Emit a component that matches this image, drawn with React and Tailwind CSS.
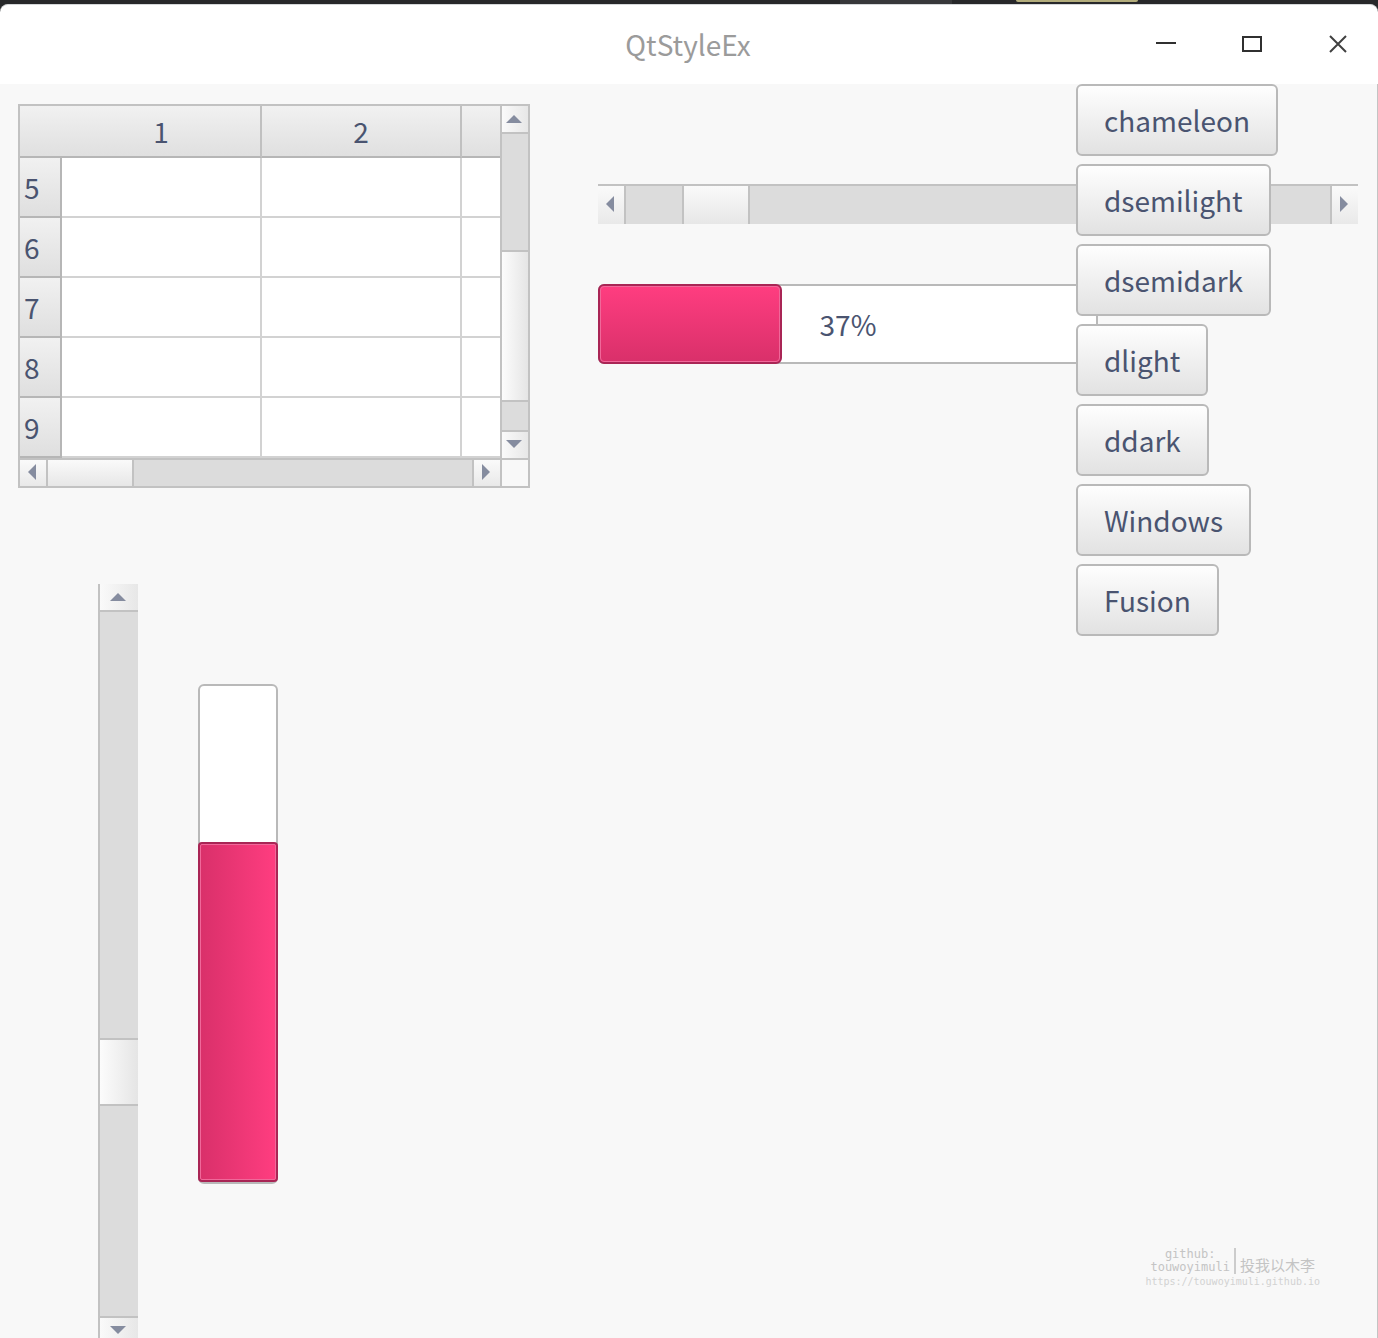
import React from "react";

const styleNames = ["chameleon", "dsemilight", "dsemidark", "dlight", "ddark", "Windows", "Fusion"];
const rows = [5, 6, 7, 8, 9];

const arrowPaths = {
  up: "M8 1 L16 9 H0 Z",
  down: "M0 0 H16 L8 8 Z",
  left: "M8 0 V16 L0 8 Z",
  right: "M0 0 L8 8 L0 16 Z",
};

function Arrow({ dir }) {
  const vertical = dir === "up" || dir === "down";
  return (
    <svg
      width={vertical ? 16 : 8}
      height={vertical ? 9 : 16}
      viewBox={vertical ? "0 0 16 9" : "0 0 8 16"}
      fill="#858c9f"
      aria-hidden="true"
    >
      <path d={arrowPaths[dir]} />
    </svg>
  );
}

function HorizontalScroll({ label, before, handle }) {
  return (
    <div
      role="scrollbar"
      aria-label={label}
      aria-orientation="horizontal"
      aria-valuenow={0}
      className="flex h-full w-full bg-[#dcdcdc]"
    >
      <button
        type="button"
        aria-label="Scroll left"
        className="flex w-7 shrink-0 items-center justify-center border-r-2 border-[#c2c2c2] bg-linear-to-b from-[#fafafa] to-[#e9e9e9] pb-0.5 pr-0.5"
      >
        <Arrow dir="left" />
      </button>
      <div className={before} />
      <div className={`shrink-0 border-r-2 border-[#c2c2c2] bg-linear-to-b from-[#fafafa] to-[#e7e7e7] ${handle}`} />
      <div className="flex-1" />
      <button
        type="button"
        aria-label="Scroll right"
        className="flex w-7 shrink-0 items-center justify-center border-l-2 border-[#c2c2c2] bg-linear-to-b from-[#fafafa] to-[#e9e9e9] pb-0.5 pr-0.5"
      >
        <Arrow dir="right" />
      </button>
    </div>
  );
}

function VerticalScroll({ label, before, handle, after }) {
  return (
    <div
      role="scrollbar"
      aria-label={label}
      aria-orientation="vertical"
      aria-valuenow={0}
      className="flex h-full w-full flex-col bg-[#dcdcdc]"
    >
      <button
        type="button"
        aria-label="Scroll up"
        className="flex h-7 shrink-0 items-center justify-center border-b-2 border-[#c2c2c2] bg-linear-to-r from-[#fafafa] to-[#e7e7e7] pb-0.5 pr-0.5"
      >
        <Arrow dir="up" />
      </button>
      <div className={before} />
      <div className={`shrink-0 border-y-2 border-[#c2c2c2] bg-linear-to-r from-[#fcfcfc] to-[#e5e5e5] ${handle}`} />
      <div className={after} />
      <button
        type="button"
        aria-label="Scroll down"
        className="flex h-7 shrink-0 items-center justify-center border-t-2 border-[#c2c2c2] bg-linear-to-r from-[#fafafa] to-[#e7e7e7] pb-0.5 pr-0.5"
      >
        <Arrow dir="down" />
      </button>
    </div>
  );
}

function TitleBar() {
  const button = "flex h-full w-20 items-center justify-center";
  return (
    <header className="grid h-20 grid-cols-[1fr_auto_1fr] items-center rounded-t-lg border-t border-[#d5d8da] bg-white">
      <div />
      <h1 className="pb-0.5 pr-0.5 text-[#9b9b9b]">QtStyleEx</h1>
      <div className="flex h-full justify-end gap-1.5">
        <button type="button" aria-label="Minimize" className={button}>
          <svg width="20" height="20" viewBox="0 0 20 20" stroke="#303030" strokeWidth="2" fill="none">
            <path d="M0 8H20" />
          </svg>
        </button>
        <button type="button" aria-label="Maximize" className={button}>
          <svg width="20" height="20" viewBox="0 0 20 20" stroke="#303030" strokeWidth="2" fill="none">
            <rect x="1" y="2" width="18" height="14" />
          </svg>
        </button>
        <button type="button" aria-label="Close" className={button}>
          <svg width="20" height="20" viewBox="0 0 20 20" stroke="#404040" strokeWidth="2" fill="none">
            <path d="M2 1L18 17M18 1L2 17" />
          </svg>
        </button>
      </div>
    </header>
  );
}

function DataTable() {
  const head = "border-b-2 border-r-2 border-[#c0c0c0] border-b-[#b6b6b6] p-0 font-normal";
  const cell = "border-b-2 border-r-2 border-[#d2d2d2] p-0";
  return (
    <div className="grid grid-cols-[1fr_28px] grid-rows-[auto_28px] border-2 border-[#c2c2c2] bg-white">
      <table className="w-full table-fixed border-separate border-spacing-0">
        <colgroup>
          <col className="w-[42px]" />
          <col className="w-[200px]" />
          <col className="w-[200px]" />
          <col />
        </colgroup>
        <thead>
          <tr className="h-[52px] bg-linear-to-b from-[#f1f1f1] to-[#dfdfdf]">
            <td className="border-b-2 border-[#b6b6b6] p-0" />
            <th scope="col" className={head}>1</th>
            <th scope="col" className={head}>2</th>
            <td className="border-b-2 border-[#b6b6b6] p-0" />
          </tr>
        </thead>
        <tbody>
          {rows.map((row) => (
            <tr key={row} className="h-[60px]">
              <th
                scope="row"
                className="border-b-2 border-r-2 border-[#b6b6b6] bg-linear-to-b from-[#f1f1f1] to-[#dfdfdf] p-0 pl-1 text-left font-normal"
              >
                {row}
              </th>
              <td className={cell} />
              <td className={cell} />
              <td className="border-b-2 border-[#d2d2d2] p-0" />
            </tr>
          ))}
        </tbody>
      </table>
      <div className="border-l-2 border-[#c2c2c2]">
        <VerticalScroll label="Table rows" before="flex-1" handle="h-[152px]" after="h-7" />
      </div>
      <div className="border-t-2 border-[#c2c2c2]">
        <HorizontalScroll label="Table columns" before="w-0" handle="w-[86px]" />
      </div>
      <div className="border-l-2 border-t-2 border-[#c2c2c2] bg-[#f8f8f8]" />
    </div>
  );
}

export default function App() {
  return (
    <div
      className="flex min-h-screen flex-col bg-[#27282a] text-[28px] leading-10 text-[#4a5470]"
      style={{ fontFamily: '"Noto Sans CJK SC", sans-serif' }}
    >
      <div className="flex h-1 justify-end pr-60">
        <div className="mr-16 h-full w-28 bg-[#37383a]" />
        <div className="h-0.5 w-[122px] rounded-b-sm bg-[#b3ad7c]" />
      </div>
      <TitleBar />
      <main className="relative flex flex-1 gap-[68px] overflow-hidden border-r border-[#c4c4c4] bg-[#f8f8f8] pl-[18px] pr-[19px]">
        <section className="flex w-[512px] shrink-0 flex-col pt-5">
          <DataTable />
          <div className="-mb-1.5 mt-24 flex flex-1 gap-[60px] pl-20">
            <div className="w-10 border-l-2 border-[#c2c2c2]">
              <VerticalScroll label="Vertical value" before="grow-[426]" handle="h-[68px]" after="grow-[210]" />
            </div>
            <div
              role="progressbar"
              aria-label="Vertical progress"
              aria-valuenow={68}
              className="mt-[100px] flex h-[500px] w-20 flex-col justify-end rounded-md border-2 border-[#b9b9b9] bg-white"
            >
              <div className="-mx-0.5 h-[340px] rounded-sm border-2 border-[#a92555] bg-linear-to-r from-[#d9306a] to-[#ff3d80]">
                <div className="h-full rounded-xs border border-[#f0689a]" />
              </div>
            </div>
          </div>
        </section>
        <section className="min-w-0 flex-1 pt-[100px]">
          <div className="h-10 border-t-2 border-[#c2c2c2]">
            <HorizontalScroll label="Horizontal value" before="w-14 border-r-2 box-content border-[#c2c2c2]" handle="w-[66px]" />
          </div>
          <div
            role="progressbar"
            aria-label="Horizontal progress"
            aria-valuenow={37}
            className="mt-[60px] grid h-20 w-[500px] items-center rounded-md border-2 border-[#b9b9b9] bg-white"
          >
            <div className="col-start-1 row-start-1 -my-0.5 -ml-0.5 h-20 w-[184px] rounded-md border-2 border-[#a92555] bg-linear-to-b from-[#ff3d80] to-[#d9306a]">
              <div className="h-full rounded-sm border border-[#f0689a]" />
            </div>
            <span className="col-start-1 row-start-1 text-center">37%</span>
          </div>
        </section>
        <nav aria-label="Styles" className="absolute right-[99px] top-0 flex w-[202px] flex-col items-start gap-2">
          {styleNames.map((name) => (
            <button
              key={name}
              type="button"
              className="h-[72px] rounded-md border-2 border-[#b9b9b9] bg-linear-to-b from-[#fefefe] to-[#e2e2e2] px-[26px]"
            >
              {name}
            </button>
          ))}
        </nav>
        <footer className="absolute bottom-12 right-[57px] flex flex-col items-center font-['DejaVu_Sans_Mono','Noto_Sans_CJK_SC',monospace] text-[#c4c4c4]">
          <div className="flex items-end gap-1">
            <p className="border-r-2 border-[#cccccc] pr-1 text-center text-xs leading-[13px]">
              github:
              <br />
              touwoyimuli
            </p>
            <p className="text-[15px] leading-4">投我以木李</p>
          </div>
          <a href="https://touwoyimuli.github.io" className="text-[10px] leading-4 text-[#d2d2d2]">
            https://touwoyimuli.github.io
          </a>
        </footer>
      </main>
    </div>
  );
}
